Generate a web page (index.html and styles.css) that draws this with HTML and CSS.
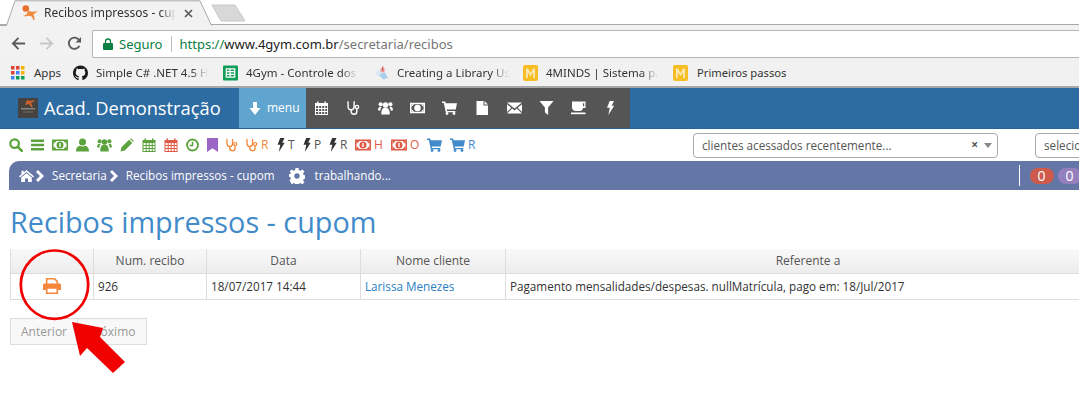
FILE: index.html
```html
<!DOCTYPE html>
<html lang="pt-BR">
<head>
<meta charset="utf-8">
<title>Recibos impressos - cupom</title>
<link rel="stylesheet" href="styles.css">
</head>
<body>
<svg class="defs" aria-hidden="true">
  <defs>
    <symbol id="i-search" viewBox="0 0 14 14"><circle cx="5.600" cy="5.600" r="4.300" fill="none" stroke="currentColor" stroke-width="2.200"/><path d="M8.800 8.800l4 4" stroke="currentColor" stroke-width="2.600" stroke-linecap="round"/></symbol>
    <symbol id="i-bars" viewBox="0 0 13 14"><path d="M0 1.500h13v2.400H0zM0 5.800h13v2.400H0zM0 10.100h13v2.400H0z" fill="currentColor"/></symbol>
    <symbol id="i-money" viewBox="0 0 16 11"><path fill-rule="evenodd" d="M0 0h16v11H0zM1.500 1.500v8h13v-8z" fill="currentColor"/><path d="M1.500 1.500h3L1.500 4.500zM14.500 1.500h-3l3 3zM1.500 9.500h3l-3-3zM14.500 9.500h-3l3-3z" fill="currentColor"/><circle cx="8" cy="5.500" r="3.500" fill="currentColor"/><path d="M7.300 3.600h1.400v3.800H7.300z" fill="#fff"/></symbol>
    <symbol id="i-user" viewBox="0 0 13 14"><circle cx="6.500" cy="4" r="3.500" fill="currentColor"/><path d="M0 13.500c0-4 2-5.500 4-5.800 1.200 1 3.800 1 5 0 2 .3 4 1.800 4 5.800z" fill="currentColor"/></symbol>
    <symbol id="i-group" viewBox="0 0 16 14"><circle cx="8" cy="3.800" r="2.900" fill="currentColor"/><circle cx="2.800" cy="3" r="2.200" fill="currentColor"/><circle cx="13.200" cy="3" r="2.200" fill="currentColor"/><path d="M3.500 13.800c-.3-4 1-6.500 3-7.200h3c2 .7 3.300 3.200 3 7.200z" fill="currentColor"/><path d="M0 9.500C0 7 1 5.800 2.300 5.600l1.700.4C3 7 2.600 8.300 2.500 9.800zM16 9.500C16 7 15 5.800 13.700 5.600l-1.700.4c1 1 1.400 2.300 1.500 3.800z" fill="currentColor"/></symbol>
    <symbol id="i-pencil" viewBox="0 0 14 14"><path d="M0.500 13.500l1-4.200L9 1.800l3.200 3.200-7.500 7.500zM9.900.9l1-.7 2.900 2.900-.7 1z" fill="currentColor"/></symbol>
    <symbol id="i-cal" viewBox="0 0 14 14"><path fill-rule="evenodd" d="M0.500 2h2V.5h1.500V2h6V.5h1.500V2h2v12H.5zM1.500 5v2h2.200V5zM4.700 5v2h2V5zM7.700 5v2h2V5zM10.700 5v2h1.900V5zM1.500 8v2h2.200V8zM4.700 8v2h2V8zM7.700 8v2h2V8zM10.700 8v2h1.900V8zM1.500 11v2h2.200v-2zM4.700 11v2h2v-2zM7.700 11v2h2v-2zM10.700 11v2h1.900v-2z" fill="currentColor"/></symbol>
    <symbol id="i-clock" viewBox="0 0 13 13"><circle cx="6.500" cy="6.500" r="5.500" fill="none" stroke="currentColor" stroke-width="1.800"/><path d="M6.500 3.200V7H3.500" fill="none" stroke="currentColor" stroke-width="1.500"/></symbol>
    <symbol id="i-bookmark" viewBox="0 0 11 14"><path d="M0 0h11v14L5.500 10.300 0 14z" fill="currentColor"/></symbol>
    <symbol id="i-steth" viewBox="0 0 13 14"><path d="M1.300.8h-.2v4.700c0 2 1.300 3.300 3 3.300s3-1.300 3-3.300V.8h-.2" fill="none" stroke="currentColor" stroke-width="1.400"/><path d="M4.100 8.800v1.400c0 1.900 1.300 3 2.900 3s2.800-1.100 2.800-2.800V8" fill="none" stroke="currentColor" stroke-width="1.400"/><circle cx="10" cy="6" r="1.700" fill="none" stroke="currentColor" stroke-width="1.300"/></symbol>
    <symbol id="i-bolt" viewBox="0 0 8 14"><path d="M3.200 0h4.300L5.200 4.800h2.500L1.800 14l1.500-7.300H.5z" fill="currentColor"/></symbol>
    <symbol id="i-cart" viewBox="0 0 15 14"><path d="M0 .5h3.200l.4 1.700H15l-1.300 6.400H4.800l.3 1.300h8.200v1.400H3.800L1.800 2H0z" fill="currentColor"/><circle cx="5" cy="12.500" r="1.400" fill="currentColor"/><circle cx="12" cy="12.500" r="1.400" fill="currentColor"/></symbol>
    <symbol id="i-file" viewBox="0 0 12 14"><path d="M0 0h7v4.500h4.500V14H0zM8 0l3.500 3.500H8z" fill="currentColor"/></symbol>
    <symbol id="i-mail" viewBox="0 0 15 11"><path d="M0 0h15L7.500 6zM0 1.800l4.300 3.500L0 9.500zM15 1.800l-4.300 3.500 4.300 4.200zM5.200 6l2.300 1.900L9.800 6 15 11H0z" fill="currentColor"/></symbol>
    <symbol id="i-filter" viewBox="0 0 13 13"><path d="M0 0h13L8 6v7L5 10.500V6z" fill="currentColor"/></symbol>
    <symbol id="i-coffee" viewBox="0 0 15 13"><path fill-rule="evenodd" d="M1 0h13.500v6.500H12c-.5 2-1.500 3-3 3H4.500C2.500 9.500 1 8 1 5.500zM12 1.800v3h1.200v-3z" fill="currentColor"/><path d="M0 11h14.500v1.700H0z" fill="currentColor"/></symbol>
    <symbol id="i-home" viewBox="0 0 15 12"><path d="M7.500 0L15 6.300l-1 1.200L7.500 2 1 7.500 0 6.300l2.500-2.100V.8h2.200v1.600zM7.500 3.200l5.300 4.400V12H9V8.500H6V12H2.200V7.600z" fill="currentColor"/></symbol>
    <symbol id="i-chev" viewBox="0 0 8 12"><path d="M2 0l6 6-6 6-2-2 4-4-4-4z" fill="currentColor"/></symbol>
    <symbol id="i-gear" viewBox="0 0 16 16"><path fill-rule="evenodd" d="M6.500 0h3l.4 2.200 1.500.6L13.300 1.500l2.100 2.100-1.300 1.900.6 1.500 2.300.5v3l-2.300.4-.6 1.500 1.300 1.900-2.100 2.100-1.900-1.300-1.500.6-.4 2.300h-3l-.4-2.300-1.500-.6-1.900 1.300L.6 12.300l1.300-1.900-.6-1.500L-1 8.500v-2l2.300-.5.6-1.500L.6 3.600l2.100-2.100 1.900 1.300 1.500-.6zM8 5.300a2.700 2.700 0 100 5.400 2.700 2.700 0 000-5.400z" fill="currentColor"/></symbol>
    <symbol id="i-m" viewBox="0 0 15 16"><rect width="15" height="16" rx="2" fill="#f7bd24"/><path d="M3 13V3.500h1.900L7.500 8l2.600-4.500H12V13h-1.800V7L7.900 10.800H7.100L4.800 7V13z" fill="#fbe9b5"/></symbol>
  </defs>
</svg>

<div class="browser">
  <div class="tabstrip">
    <svg class="tabshape" viewBox="0 0 220 26" aria-hidden="true"><path d="M0 25.500h6.500L15 1h185l11.500 24.500H220V26H0z" fill="#f2f2f2"/><path d="M0 25.500h6.500L15 .8h185l11.500 24.700" fill="none" stroke="#a9a9a9"/></svg>
    <div class="tab">
      <svg class="favicon" viewBox="0 0 16 16" aria-hidden="true"><circle cx="3.800" cy="3.500" r="3.300" fill="#e8702a"/><path d="M6 5.500c3 1.700 6 1.500 9.500.5-1.800 2-3.300 3-4.500 3.200 1 1 1.500 2.500 1.500 5.800h-1.300C11 12.500 9.500 11 8 10.700 6 11 3.500 11.500 1 11c2-.5 3.500-1.500 4.500-3z" fill="#ef8a3c"/></svg>
      <span class="tabtitle">Recibos impressos - cupom</span>
      <svg class="tabclose" viewBox="0 0 9 9" aria-hidden="true"><path d="M1 1l7 7M8 1L1 8" fill="none" stroke="#5a5a5a" stroke-width="1.700"/></svg>
    </div>
    <svg class="newtab" viewBox="0 0 36 18" aria-hidden="true"><path d="M1 1h23l10 16H10z" fill="#d8d8d8" stroke="#c8c8c8"/></svg>
  </div>
  <div class="toolbar">
    <svg class="navbtn" viewBox="0 0 16 16" aria-hidden="true"><path d="M15 8H2M8 2L2 8l6 6" fill="none" stroke="#5a5a5a" stroke-width="2"/></svg>
    <svg class="navbtn" viewBox="0 0 16 16" aria-hidden="true"><path d="M1 8h13M8 2l6 6-6 6" fill="none" stroke="#c8c8c8" stroke-width="2"/></svg>
    <svg class="navbtn" viewBox="0 0 16 16" aria-hidden="true"><path d="M13.300 10.500A6 6 0 1 1 13 4.500" fill="none" stroke="#5a5a5a" stroke-width="2"/><path d="M15 1v6H9z" fill="#5a5a5a"/></svg>
    <div class="omnibox">
      <svg class="lock" viewBox="0 0 10 12" aria-hidden="true"><path d="M2.500 5V3.500a2.500 2.500 0 0 1 5 0V5" fill="none" stroke="#0b8043" stroke-width="1.300"/><rect y="5" width="10" height="7" rx="1" fill="#0b8043"/></svg>
      <span class="secure">Seguro</span>
      <span class="sep"></span>
      <span class="url"><span class="scheme">https://</span><span class="host">www.4gym.com.br</span><span class="path">/secretaria/recibos</span></span>
    </div>
  </div>
  <div class="bookmarks">
    <span class="bm bm-apps">
      <svg class="bmicon appsgrid" viewBox="0 0 14 14" aria-hidden="true"><path fill="#db4437" d="M0 0h3.500v3.500H0zM5 0h3.500v3.500H5z"/><path fill="#f4b400" d="M10 0h3.500v3.500H10zM10 5h3.500v3.500H10z"/><path fill="#db4437" d="M0 5h3.500v3.500H0z"/><path fill="#4285f4" d="M5 5h3.500v3.500H5zM0 10h3.500v3.500H0z"/><path fill="#0f9d58" d="M5 10h3.500v3.500H5zM10 10h3.500v3.500H10z"/></svg>
      Apps
    </span>
    <span class="bm bm-gh">
      <svg class="bmicon" viewBox="0 0 16 16" aria-hidden="true"><path fill="#1b1b1b" d="M8 0C3.580 0 0 3.580 0 8c0 3.540 2.290 6.530 5.470 7.590.4.070.55-.17.55-.38 0-.19-.01-.82-.01-1.490-2.010.37-2.530-.49-2.690-.94-.09-.23-.48-.94-.82-1.130-.28-.15-.68-.52-.01-.53.63-.01 1.080.58 1.230.82.720 1.210 1.870.87 2.330.66.070-.52.28-.87.51-1.070-1.780-.2-3.640-.89-3.640-3.950 0-.87.31-1.590.82-2.150-.08-.2-.36-1.020.08-2.120 0 0 .67-.21 2.200.82.64-.18 1.320-.27 2-.27.68 0 1.360.09 2 .27 1.530-1.040 2.200-.82 2.200-.82.44 1.100.16 1.920.08 2.120.51.56.82 1.270.82 2.150 0 3.070-1.870 3.750-3.650 3.950.29.25.54.73.54 1.480 0 1.070-.01 1.930-.01 2.200 0 .21.15.46.55.38A8.013 8.013 0 0 0 16 8c0-4.420-3.580-8-8-8z"/></svg>
      <span class="bmtext">Simple C# .NET 4.5 HTML</span>
    </span>
    <span class="bm bm-sheet">
      <svg class="bmicon" viewBox="0 0 16 16" aria-hidden="true"><rect width="16" height="16" rx="1" fill="#0f9d58"/><path fill="none" stroke="#fff" stroke-width="1.300" d="M3.500 3.500h9v9h-9zM3.500 6.500h9M3.500 9.500h9M7.500 3.500v9"/></svg>
      <span class="bmtext">4Gym - Controle dos alunos</span>
    </span>
    <span class="bm bm-lib">
      <svg class="bmicon bmicon-lib" viewBox="0 0 16 16" aria-hidden="true"><circle cx="4" cy="8" r="3" fill="#dceaf6"/><path d="M4 10l5 5 5-2-4-6z" fill="#a9d0ee"/><circle cx="8" cy="5" r="2.500" fill="#e9a9a0"/><path d="M7.500 1h1.500v5H7.500z" fill="#d9685e"/></svg>
      <span class="bmtext">Creating a Library Using</span>
    </span>
    <span class="bm bm-m1">
      <svg class="bmicon" aria-hidden="true"><use href="#i-m"/></svg>
      <span class="bmtext">4MINDS | Sistema para</span>
    </span>
    <span class="bm bm-m2">
      <svg class="bmicon" aria-hidden="true"><use href="#i-m"/></svg>
      <span class="bmplain">Primeiros passos</span>
    </span>
  </div>
</div>

<header class="navbar">
  <div class="brand">
    <svg class="logo" viewBox="0 0 20 20" aria-hidden="true"><rect width="20" height="20" fill="#45423f"/><path d="M9 2c2 1 5 1 8 0-1 2-3 3-4 3l2 4h-2L11 6 7 7z" fill="#c8622a"/><path d="M3 10h14v1.500H3z" fill="#8b8580"/><path d="M5 13h10v2H5z" fill="#5d5753"/></svg>
    <span class="brandname">Acad. Demonstração</span>
  </div>
  <a class="menubtn"><svg class="menuarrow" viewBox="0 0 12 13" aria-hidden="true"><path d="M4 0h4v6h3.500L6 13 .5 6H4z" fill="#fff"/></svg>menu</a>
  <nav class="menuicons">
    <svg class="mi" aria-hidden="true"><use href="#i-cal"/></svg>
    <svg class="mi" aria-hidden="true"><use href="#i-steth"/></svg>
    <svg class="mi" aria-hidden="true"><use href="#i-group"/></svg>
    <svg class="mi" aria-hidden="true"><use href="#i-money"/></svg>
    <svg class="mi" aria-hidden="true"><use href="#i-cart"/></svg>
    <svg class="mi" aria-hidden="true"><use href="#i-file"/></svg>
    <svg class="mi" aria-hidden="true"><use href="#i-mail"/></svg>
    <svg class="mi" aria-hidden="true"><use href="#i-filter"/></svg>
    <svg class="mi" aria-hidden="true"><use href="#i-coffee"/></svg>
    <svg class="mi" aria-hidden="true"><use href="#i-bolt"/></svg>
  </nav>
</header>

<div class="shortcuts">
  <div class="quick">
    <svg class="q green" aria-hidden="true"><use href="#i-search"/></svg>
    <svg class="q w13 green" aria-hidden="true"><use href="#i-bars"/></svg>
    <svg class="q w16 green" aria-hidden="true"><use href="#i-money"/></svg>
    <svg class="q w13 green" aria-hidden="true"><use href="#i-user"/></svg>
    <svg class="q w15 green" aria-hidden="true"><use href="#i-group"/></svg>
    <svg class="q green" aria-hidden="true"><use href="#i-pencil"/></svg>
    <svg class="q green" aria-hidden="true"><use href="#i-cal"/></svg>
    <svg class="q red" aria-hidden="true"><use href="#i-cal"/></svg>
    <svg class="q w13 green" aria-hidden="true"><use href="#i-clock"/></svg>
    <svg class="q w11 purple" aria-hidden="true"><use href="#i-bookmark"/></svg>
    <svg class="q w12 orange" aria-hidden="true"><use href="#i-steth"/></svg>
    <span class="qi qi-steth orange"><svg class="q w12" aria-hidden="true"><use href="#i-steth"/></svg>R</span>
    <span class="qi qi-bolt"><svg class="q w8 dark" aria-hidden="true"><use href="#i-bolt"/></svg>T</span>
    <span class="qi qi-bolt"><svg class="q w8 dark" aria-hidden="true"><use href="#i-bolt"/></svg>P</span>
    <span class="qi qi-bolt"><svg class="q w8 dark" aria-hidden="true"><use href="#i-bolt"/></svg>R</span>
    <span class="qi qi-money red"><svg class="q w16" aria-hidden="true"><use href="#i-money"/></svg>H</span>
    <span class="qi qi-money red"><svg class="q w16" aria-hidden="true"><use href="#i-money"/></svg>O</span>
    <svg class="q w15 blue" aria-hidden="true"><use href="#i-cart"/></svg>
    <span class="qi blue"><svg class="q w15" aria-hidden="true"><use href="#i-cart"/></svg>R</span>
  </div>
  <div class="select select-clients"><span class="seltext">clientes acessados recentemente...</span><span class="selx">×</span><span class="selcaret"></span></div>
  <div class="select select-other"><span class="seltext">selecione...</span></div>
</div>

<div class="crumbs">
  <svg class="home" aria-hidden="true"><use href="#i-home"/></svg>
  <svg class="chev" aria-hidden="true"><use href="#i-chev"/></svg>
  <span class="crumb first">Secretaria</span>
  <svg class="chev" aria-hidden="true"><use href="#i-chev"/></svg>
  <span class="crumb">Recibos impressos - cupom</span>
  <svg class="gear" aria-hidden="true"><use href="#i-gear"/></svg>
  <span class="working">trabalhando...</span>
  <span class="badges"><span class="badge b-red">0</span><span class="badge b-purple">0</span></span>
</div>

<main class="content">
  <h1>Recibos impressos - cupom</h1>
  <table class="grid">
    <colgroup><col class="c1"><col class="c2"><col class="c3"><col class="c4"><col class="c5"></colgroup>
    <thead>
      <tr><th></th><th>Num. recibo</th><th>Data</th><th>Nome cliente</th><th>Referente a</th></tr>
    </thead>
    <tbody>
      <tr>
        <td class="printcell"><svg class="printer" viewBox="0 0 18 16" aria-hidden="true"><path d="M3.700.8h7.800l2.800 2.600v4.600H3.700z" fill="#fff" stroke="#f4873a" stroke-width="1.600"/><path d="M1.500 5.500H16.500C17.300 5.500 18 6.200 18 7V12H0V7C0 6.200.7 5.500 1.500 5.500z" fill="#f4873a"/><path d="M3.700 10h10.600v5.200H3.700z" fill="#fff" stroke="#f4873a" stroke-width="1.600"/></svg></td>
        <td>926</td>
        <td>18/07/2017 14:44</td>
        <td><a class="link">Larissa Menezes</a></td>
        <td>Pagamento mensalidades/despesas. nullMatrícula, pago em: 18/Jul/2017</td>
      </tr>
    </tbody>
  </table>
  <div class="pager"><span class="pgbtn">Anterior</span><span class="pgbtn next">Próximo</span></div>
</main>

<svg class="annotation" viewBox="0 0 1079 414" aria-hidden="true">
  <ellipse cx="54.500" cy="284.700" rx="33.700" ry="34.200" fill="none" stroke="#f00000" stroke-width="2.700"/>
  <path d="M72 322L103 328 100 337 125 362 113 373 87 348 80 356z" fill="#f00000"/>
</svg>
</body>
</html>
```

FILE: styles.css
```css
* { box-sizing: border-box; }
html, body { margin: 0; height: 100%; }
body {
  position: relative;
  width: 1079px;
  height: 414px;
  overflow: hidden;
  background: #fff;
  color: #333;
  font: 12px/1.4 "Open Sans", sans-serif;
}
.defs { position: absolute; width: 0; height: 0; }

/* browser chrome */
.browser { font-family: "Noto Sans", sans-serif; color: #333; }
.tabstrip { position: relative; height: 25px; display: flex; align-items: flex-start; border-bottom: 1px solid #a9a9a9; background: #fff; }
.tabshape { position: absolute; left: 0; top: 0; width: 220px; height: 26px; }
.tab { position: relative; display: flex; align-items: center; width: 175px; height: 24px; margin: 1px 0 0 22px; }
.favicon { width: 16px; height: 16px; flex: none; margin-right: 6px; }
.tabtitle { width: 132px; white-space: nowrap; overflow: hidden; font-size: 12px; -webkit-mask-image: linear-gradient(90deg, #000 88%, transparent); mask-image: linear-gradient(90deg, #000 88%, transparent); }
.tabclose { width: 9px; height: 9px; margin-left: 8px; flex: none; }
.newtab { position: relative; width: 36px; height: 18px; margin: 4px 0 0 14px; }
.toolbar { height: 33px; background: #f2f2f2; display: flex; align-items: flex-start; padding: 5px 0 0 11px; }
.navbtn { width: 15px; height: 15px; flex: none; margin: 6px 13px 0 0; }
.omnibox { flex: 1; height: 28px; margin-left: -3px; background: #fff; border: 1px solid #b5b5b5; border-right: 0; border-radius: 2px 0 0 2px; display: flex; align-items: center; padding-left: 10px; font-size: 13px; }
.lock { width: 10px; height: 12px; flex: none; margin-right: 6px; }
.secure { color: #0b8043; }
.sep { width: 1px; height: 16px; background: #bbb; margin: 0 7px 0 9px; }
.scheme { color: #0b8043; }
.host { color: #222; }
.path { color: #777; }
.bookmarks { height: 30px; background: #f1f1f1; border-bottom: 2px solid #a7a7a7; display: flex; align-items: center; padding: 2px 0 0 11px; font-size: 11.500px; }
.bm { display: flex; align-items: center; flex: none; white-space: nowrap; }
.bmicon { width: 15px; height: 16px; flex: none; margin-right: 8px; }
.bmicon-lib { margin-right: 7px; }
.appsgrid { width: 14px; height: 14px; margin-right: 9px; }
.bm-apps { width: 62px; }
.bm-gh { width: 150px; }
.bm-sheet { width: 152px; }
.bm-lib { width: 148px; }
.bm-m1 { width: 150px; }
.bm-m2 .bmicon { margin-right: 9px; }
.bmplain { font-size: 11.200px; }
.bmtext { width: 112px; overflow: hidden; -webkit-mask-image: linear-gradient(90deg, #000 85%, transparent); mask-image: linear-gradient(90deg, #000 85%, transparent); }

/* navbar */
.navbar { height: 41px; background: #2d6ca2; display: flex; align-items: stretch; color: #fff; border-bottom: 1px solid #2a6598; }
.brand { width: 239px; display: flex; align-items: center; padding-left: 18px; }
.logo { width: 20px; height: 20px; margin-right: 6px; }
.brandname { font-size: 18.300px; }
.menubtn { width: 67px; background: #5fa5d0; display: flex; align-items: center; padding-left: 10px; font-size: 12px; }
.menuarrow { width: 12px; height: 13px; margin-right: 6px; }
.menuicons { width: 324px; background: #555; display: flex; align-items: center; justify-content: space-between; padding: 0 12px 0 8px; color: #fff; }
.mi { width: 15px; height: 14px; }

/* shortcuts row */
.shortcuts { height: 32px; display: flex; align-items: center; padding-left: 9px; }
.quick { display: flex; align-items: center; gap: 8px; width: 684px; flex: none; }
.q { width: 14px; height: 14px; flex: none; }
.w16 { width: 16px; }
.w15 { width: 15px; }
.w13 { width: 13px; }
.w12 { width: 12px; }
.w11 { width: 11px; }
.w8 { width: 8px; }
.qi { display: inline-flex; align-items: center; gap: 3px; font-size: 12px; line-height: 14px; }
.qi-steth { width: 23px; }
.qi-bolt { width: 18px; color: #555; }
.qi-money { width: 28px; }
.green { color: #5ca23c; }
.red { color: #df5b47; }
.purple { color: #9a65c4; }
.orange { color: #f4873a; }
.dark { color: #333; }
.blue { color: #428bca; }
.select { height: 25px; background: #fff; border: 1px solid #aaa; border-radius: 4px; display: flex; align-items: center; padding-left: 8px; color: #555; font-size: 11.700px; flex: none; }
.select-clients { width: 305px; margin-right: 37px; }
.select-other { width: 120px; }
.seltext { flex: 1; white-space: nowrap; }
.selx { font-weight: 700; font-size: 12px; margin-right: 6px; }
.selcaret { width: 0; height: 0; border: 4px solid transparent; border-top: 5px solid #888; border-bottom: 0; margin-right: 5px; }

/* breadcrumb */
.crumbs { height: 29px; margin-left: 9px; width: 1100px; background: #6376a6; border-radius: 10px 0 0 0; color: #fff; display: flex; align-items: center; padding-left: 10px; font-size: 11.700px; }
.home { width: 15px; height: 12px; margin-right: 2px; flex: none; }
.chev { width: 8px; height: 12px; margin-right: 8px; flex: none; }
.crumb.first { margin-right: 3px; }
.crumb { margin-right: 0; }
.gear { width: 16px; height: 16px; margin: 0 10px 0 14px; flex: none; }
.working { width: 704px; flex: none; }
.badges { display: flex; gap: 4px; border-left: 1px solid #fff; height: 21px; align-items: center; padding-left: 10px; }
.badge { min-width: 24px; height: 16px; border-radius: 9px; text-align: center; font-size: 14px; line-height: 16px; color: #fff; }
.b-red { background: #cd5a4b; }
.b-purple { background: #9580bd; }

/* content */
.content { padding: 0 0 0 10px; }
h1 { margin: 0; padding-top: 13px; height: 59px; font-size: 28.800px; font-weight: 400; line-height: 38px; color: #428bca; white-space: nowrap; }
.grid { border-collapse: collapse; table-layout: fixed; width: 1100px; font-size: 11.700px; }
.c1 { width: 83px; } .c2 { width: 113px; } .c3 { width: 154px; } .c4 { width: 145px; } .c5 { width: 605px; }
.grid th { height: 24px; padding: 2px 0 0; border: 1px solid #ddd; border-top: 0; background: linear-gradient(#f9f9f9, #ececec); font-weight: 400; color: #555; text-align: center; font-size: 12px; }
.grid td { height: 26px; padding: 0 4px; border: 1px solid #ddd; color: #333; white-space: nowrap; }
.printcell { text-align: center; }
.printer { width: 18px; height: 16px; display: block; margin: 0 auto; }
.link { color: #2a7fc4; }
.pager { display: flex; margin-top: 18px; }
.pgbtn { width: 68px; height: 27px; padding-top: 2px; border: 1px solid #ddd; background: #f8f8f8; color: #999; display: flex; align-items: center; justify-content: center; font-size: 12px; }
.pgbtn.next { width: 69px; border-left: 0; }

.annotation { position: absolute; left: 0; top: 0; width: 1079px; height: 414px; pointer-events: none; }
```
